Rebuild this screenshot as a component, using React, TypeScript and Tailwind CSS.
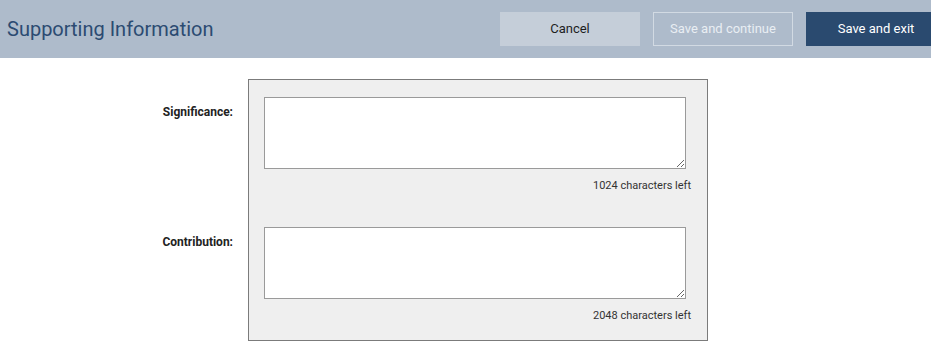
const FIELDS = [
  { key: "significance", label: "Significance:", left: 1024 },
  { key: "contribution", label: "Contribution:", left: 2048 },
];

export default function App() {
  return (
    <div className="min-h-screen bg-white font-['Roboto','Liberation_Sans',sans-serif]">
      {/* Header */}
      <div className="flex h-[58px] items-center overflow-hidden bg-[#aebbcb] pl-[7px]">
        <h1 className="flex-1 text-[20px] text-[#2c4b72]">Supporting Information</h1>
        <div className="-mr-[15px] flex shrink-0 gap-[13px]">
          <button className="h-[34px] w-[140px] bg-[#c5ced9] text-[13px] text-[#1e1e1e]">Cancel</button>
          <button className="h-[34px] w-[140px] border border-[#d2dae3] text-[13px] text-[#e9eef3]">
            Save and continue
          </button>
          <button className="h-[34px] w-[140px] bg-[#2a4a6f] text-[13px] text-white">Save and exit</button>
        </div>
      </div>

      {/* Form */}
      <div className="mt-[21px] flex">
        <div className="flex w-[233px] shrink-0 flex-col items-end pt-[25px]">
          {FIELDS.map((f, i) => (
            <label
              key={f.key}
              className={`text-[12px] font-bold leading-4 text-[#222] ${i > 0 ? "mt-[114px]" : ""}`}
            >
              {f.label}
            </label>
          ))}
        </div>
        <div className="ml-[15px] w-[460px] border border-[#7b7b7b] bg-[#efefef] pb-[16px] pl-[15px] pr-4 pt-[17px]">
          {FIELDS.map((f, i) => (
            <div key={f.key} className={i > 0 ? "mt-[33px]" : ""}>
              <textarea className="block h-[72px] w-[422px] border border-[#9a9a9a] bg-white" />
              <p className="mt-[9px] text-right text-[11px] leading-4 text-[#333]">{f.left} characters left</p>
            </div>
          ))}
        </div>
      </div>
    </div>
  );
}
